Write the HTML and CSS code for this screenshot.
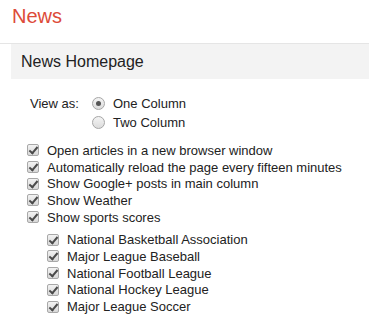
FILE: index.html
```html
<!DOCTYPE html>
<html lang="en">
<head>
    <meta charset="UTF-8">
    <meta name="viewport" content="width=device-width, initial-scale=1.0">
    <title>News</title>
    <link rel="stylesheet" href="styles.css">
</head>
<body>
    <h1 class="title">News</h1>
    <div class="section-head">News Homepage</div>

    <div class="settings">
        <div class="view-as">
            <span class="view-label">View as:</span>
            <div class="radios">
                <label class="radio-row"><span class="radio checked"></span>One Column</label>
                <label class="radio-row"><span class="radio"></span>Two Column</label>
            </div>
        </div>

        <div class="checks">
            <label class="check-row"><span class="box"></span>Open articles in a new browser window</label>
            <label class="check-row"><span class="box"></span>Automatically reload the page every fifteen minutes</label>
            <label class="check-row"><span class="box"></span>Show Google+ posts in main column</label>
            <label class="check-row"><span class="box"></span>Show Weather</label>
            <label class="check-row"><span class="box"></span>Show sports scores</label>
        </div>

        <div class="checks sub">
            <label class="check-row"><span class="box"></span>National Basketball Association</label>
            <label class="check-row"><span class="box"></span>Major League Baseball</label>
            <label class="check-row"><span class="box"></span>National Football League</label>
            <label class="check-row"><span class="box"></span>National Hockey League</label>
            <label class="check-row"><span class="box"></span>Major League Soccer</label>
        </div>
    </div>
</body>
</html>
```

FILE: styles.css
```css
*{
    box-sizing:border-box;
}
body{
    margin:0;
    font-family:"Liberation Sans", Arial, sans-serif;
    color:#222;
    background:#fff;
}
.title{
    margin:0;
    height:44px;
    padding:5px 0 0 12px;
    font-size:20px;
    font-weight:normal;
    color:#dd4b39;
    border-bottom:1px solid #e5e5e5;
}
.section-head{
    margin-left:11px;
    height:35px;
    padding-left:10px;
    display:flex;
    align-items:center;
    background:#f3f3f3;
    font-size:16px;
    color:#222;
}
.settings{
    padding:15px 0 0 27px;
    font-size:13px;
}
.view-as{
    display:flex;
    padding-left:3px;
}
.view-label{
    width:62px;
    line-height:19px;
}
.radio-row{
    display:flex;
    align-items:center;
    height:19px;
}
.radio{
    width:13px;
    height:13px;
    margin-right:8px;
    border:1px solid #a6a6a6;
    border-radius:50%;
    background:linear-gradient(#f4f4f4, #dcdcdc);
    position:relative;
}
.radio.checked::after{
    content:"";
    position:absolute;
    left:3px;
    top:3px;
    width:5px;
    height:5px;
    border-radius:50%;
    background:#555;
}
.checks{
    margin-top:10px;
}
.checks.sub{
    margin-top:6px;
    padding-left:20px;
}
.check-row{
    display:flex;
    align-items:center;
    height:16.7px;
}
.box{
    width:12px;
    height:12px;
    margin-right:8px;
    border:1px solid #a8a8a8;
    border-radius:2px;
    background:linear-gradient(#f2f2f2, #d8d8d8);
    position:relative;
}
.box::after{
    content:"";
    position:absolute;
    left:3px;
    top:0px;
    width:3px;
    height:7px;
    border:solid #4a4a4a;
    border-width:0 2px 2px 0;
    transform:rotate(40deg);
}
```
